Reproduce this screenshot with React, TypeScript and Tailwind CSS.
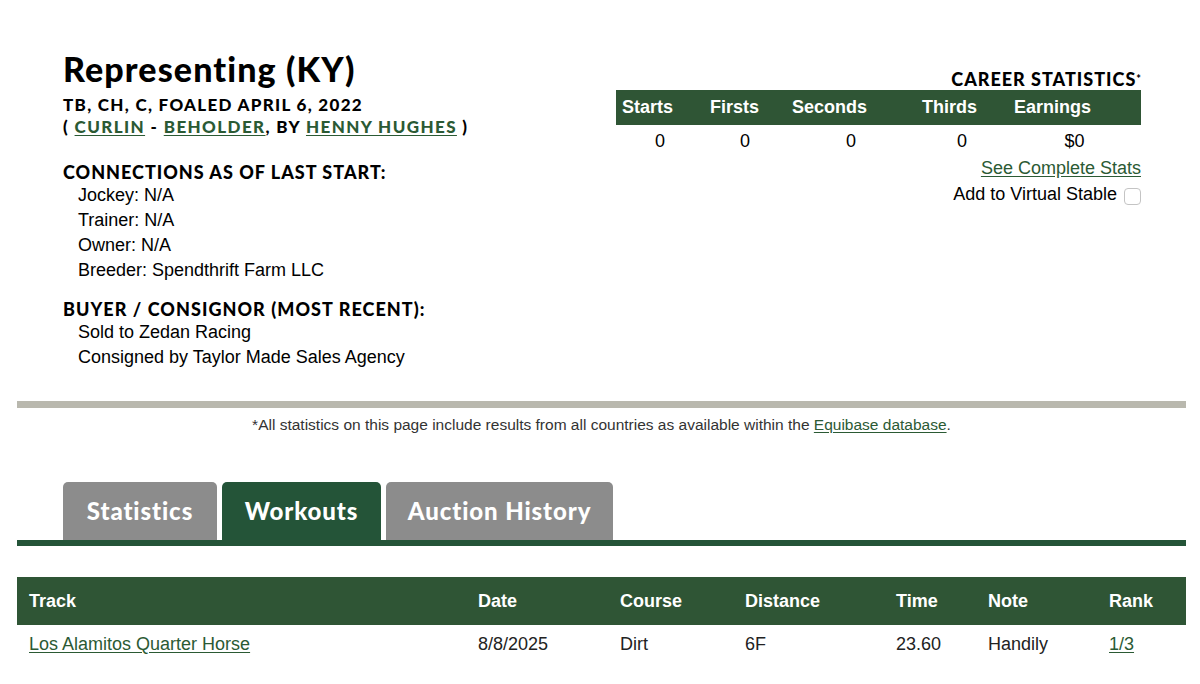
import React from "react";

const HEAD = { fontFamily: "Lato, 'Open Sans', sans-serif" } as const;
const BODY = { fontFamily: "'Liberation Sans', Arial, sans-serif" } as const;

const statCols = [
  { label: "Starts", value: "0", w: "w-[88px]" },
  { label: "Firsts", value: "0", w: "w-[82px]" },
  { label: "Seconds", value: "0", w: "w-[130px]" },
  { label: "Thirds", value: "0", w: "w-[92px]" },
  { label: "Earnings", value: "$0", w: "w-[133px]" },
];

const workCols = [
  { label: "Track", w: "w-[449px]" },
  { label: "Date", w: "w-[142px]" },
  { label: "Course", w: "w-[125px]" },
  { label: "Distance", w: "w-[151px]" },
  { label: "Time", w: "w-[92px]" },
  { label: "Note", w: "w-[121px]" },
  { label: "Rank", w: "flex-1" },
];

export default function App() {
  return (
    <div className="w-[1200px] h-[684px] bg-white text-black overflow-hidden" style={BODY}>
      <div className="ml-[17px] mr-[14px]">
        {/* Top section */}
        <div className="flex justify-between pl-[46px] pr-[45px]">
          {/* Left */}
          <div className="pt-[49px]">
            <h1 className="text-[34px] leading-[40px] font-[900] tracking-[1.1px]" style={HEAD}>
              Representing (KY)
            </h1>
            <div className="text-[17px] leading-[22px] font-[900] tracking-[1.3px] mt-[5px]" style={HEAD}>
              TB, CH, C, FOALED APRIL 6, 2022
            </div>
            <div className="text-[17px] leading-[22px] font-[900] tracking-[1.4px]" style={HEAD}>
              ({" "}
              <a className="text-[#2b5a34] underline underline-offset-2">CURLIN</a> -{" "}
              <a className="text-[#2b5a34] underline underline-offset-2">BEHOLDER</a>, BY{" "}
              <a className="text-[#2b5a34] underline underline-offset-2">HENNY HUGHES</a> )
            </div>

            <div className="text-[18px] leading-[22px] font-[900] tracking-[1px] mt-[23px]" style={HEAD}>
              CONNECTIONS AS OF LAST START:
            </div>
            <div className="pl-[15px] text-[18px] leading-[25px]">
              <div>Jockey: N/A</div>
              <div>Trainer: N/A</div>
              <div>Owner: N/A</div>
              <div>Breeder: Spendthrift Farm LLC</div>
            </div>

            <div className="text-[18px] leading-[22px] font-[900] tracking-[1.05px] mt-[15px]" style={HEAD}>
              BUYER / CONSIGNOR (MOST RECENT):
            </div>
            <div className="pl-[15px] text-[18px] leading-[25px]">
              <div>Sold to Zedan Racing</div>
              <div>Consigned by Taylor Made Sales Agency</div>
            </div>
          </div>

          {/* Right */}
          <div className="pt-[68px] w-[525px]">
            <div className="text-right text-[18px] leading-[22px] font-[900] tracking-[1px]" style={HEAD}>
              CAREER STATISTICS<span className="align-top text-[11px] tracking-normal">*</span>
            </div>
            <div className="flex bg-[#2f5535] text-white h-[35px] items-center font-bold text-[18px]">
              {statCols.map((c) => (
                <div key={c.label} className={`${c.w} pl-[6px]`}>
                  {c.label}
                </div>
              ))}
            </div>
            <div className="flex h-[32px] items-center text-[18px]">
              {statCols.map((c) => (
                <div key={c.label} className={`${c.w} text-center`}>
                  {c.value}
                </div>
              ))}
            </div>
            <div className="text-right text-[18px] leading-[22px]">
              <a className="text-[#2b5a34] underline underline-offset-2">See Complete Stats</a>
            </div>
            <div className="flex justify-end items-center gap-[7px] mt-[3px] text-[18px] leading-[22px]">
              <span>Add to Virtual Stable</span>
              <span className="inline-block w-[17px] h-[17px] mt-[6px] border border-[#c4c4c4] rounded-[4px] bg-white" />
            </div>
          </div>
        </div>

        {/* Divider */}
        <div className="h-[7px] bg-[#b9b8ae] mt-[31px]" />

        {/* Footnote */}
        <div className="text-center text-[15.5px] leading-[22px] text-[#333] mt-[6px]">
          *All statistics on this page include results from all countries as available within the{" "}
          <a className="text-[#2b5a34] underline underline-offset-2">Equibase database</a>.
        </div>

        {/* Tabs */}
        <div className="flex gap-[5px] pl-[46px] mt-[46px]">
          <div className="w-[154px] h-[58px] bg-[#8c8c8c] rounded-t-[5px] flex items-center justify-center text-white text-[24px] font-[900] tracking-[0.9px]" style={HEAD}>
            Statistics
          </div>
          <div className="w-[159px] h-[58px] bg-[#245438] rounded-t-[5px] flex items-center justify-center text-white text-[24px] font-[900] tracking-[0.9px]" style={HEAD}>
            Workouts
          </div>
          <div className="w-[227px] h-[58px] bg-[#8c8c8c] rounded-t-[5px] flex items-center justify-center text-white text-[24px] font-[900] tracking-[0.9px]" style={HEAD}>
            Auction History
          </div>
        </div>
        <div className="h-[6px] bg-[#245438]" />

        {/* Workouts table */}
        <div className="mt-[31px]">
          <div className="flex h-[48px] items-center bg-[#2f5535] text-white font-bold text-[18px]">
            {workCols.map((c) => (
              <div key={c.label} className={`${c.w} pl-[12px]`}>
                {c.label}
              </div>
            ))}
          </div>
          <div className="flex h-[38px] items-center text-[18px] text-[#222]">
            <div className="w-[449px] pl-[12px]">
              <a className="text-[#2b5a34] underline underline-offset-2">Los Alamitos Quarter Horse</a>
            </div>
            <div className="w-[142px] pl-[12px]">8/8/2025</div>
            <div className="w-[125px] pl-[12px]">Dirt</div>
            <div className="w-[151px] pl-[12px]">6F</div>
            <div className="w-[92px] pl-[12px]">23.60</div>
            <div className="w-[121px] pl-[12px]">Handily</div>
            <div className="flex-1 pl-[12px]">
              <a className="text-[#2b5a34] underline underline-offset-2">1/3</a>
            </div>
          </div>
        </div>
      </div>
    </div>
  );
}
